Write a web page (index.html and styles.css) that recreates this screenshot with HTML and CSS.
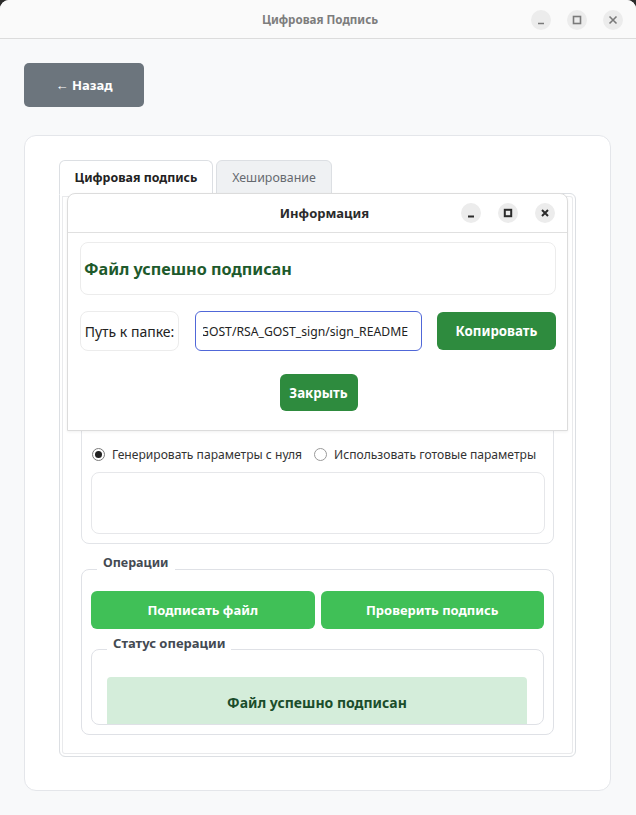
FILE: index.html
```html
<!DOCTYPE html>
<html lang="ru">
<head>
<meta charset="utf-8">
<title>Цифровая Подпись</title>
<link rel="stylesheet" href="styles.css">
</head>
<body>
<div class="window">
  <header class="titlebar">
    <div></div>
    <div class="title">Цифровая Подпись</div>
    <div class="wbtns">
      <span class="wbtn"><svg viewBox="0 0 20 20" width="20" height="20"><path d="M7 13.5h6" /></svg></span>
      <span class="wbtn"><svg viewBox="0 0 20 20" width="20" height="20"><rect x="6.5" y="6.5" width="7" height="7" /></svg></span>
      <span class="wbtn"><svg viewBox="0 0 20 20" width="20" height="20"><path d="M6.5 6.5l7 7M13.5 6.5l-7 7" /></svg></span>
    </div>
  </header>
  <main class="content">
    <button class="back">← Назад</button>
    <section class="card">
      <div class="tabs">
        <div class="tab active">Цифровая подпись</div>
        <div class="tab">Хеширование</div>
      </div>
      <div class="pane">
        <div class="params">
          <div class="radios">
            <label class="radio"><span class="dot checked"></span>Генерировать параметры с нуля</label>
            <label class="radio"><span class="dot"></span>Использовать готовые параметры</label>
          </div>
          <div class="textbox"></div>
        </div>
        <fieldset class="group ops">
          <legend>Операции</legend>
          <div class="op-buttons">
            <button class="btn-light">Подписать файл</button>
            <button class="btn-light">Проверить подпись</button>
          </div>
          <fieldset class="group status">
            <legend>Статус операции</legend>
            <div class="status-box">Файл успешно подписан</div>
          </fieldset>
        </fieldset>

        <div class="dialog">
          <div class="dlg-head">
            <div></div>
            <div class="dlg-title">Информация</div>
            <div class="dlg-btns">
              <span class="dbtn"><svg viewBox="0 0 20 20" width="20" height="20"><path d="M7 13.5h6" /></svg></span>
              <span class="dbtn"><svg viewBox="0 0 20 20" width="20" height="20"><rect x="6.8" y="6.8" width="6.4" height="6.4" /></svg></span>
              <span class="dbtn"><svg viewBox="0 0 20 20" width="20" height="20"><path d="M7 7l6 6M13 7l-6 6" /></svg></span>
            </div>
          </div>
          <div class="dlg-body">
            <div class="msg">Файл успешно подписан</div>
            <div class="path-row">
              <div class="path-label">Путь к папке:</div>
              <div class="path-input"><div class="path-clip"><span>RSA_GOST/RSA_GOST_sign/sign_README</span></div></div>
              <button class="btn-dark copy">Копировать</button>
            </div>
            <div class="close-row">
              <button class="btn-dark close">Закрыть</button>
            </div>
          </div>
        </div>
      </div>
    </section>
  </main>
</div>
</body>
</html>
```

FILE: styles.css
```css
* { box-sizing: border-box; }
html, body { margin: 0; padding: 0; }
body {
  background: #2b2b2b;
  font-family: "Noto Sans", "Open Sans", sans-serif;
  width: 636px;
  height: 815px;
  overflow: hidden;
}
.window {
  width: 636px;
  height: 815px;
  background: #f8f9fa;
  border-radius: 9px 9px 0 0;
  overflow: hidden;
}
.titlebar {
  height: 39px;
  background: #fafafa;
  border-bottom: 1px solid #dcdcdc;
  display: grid;
  grid-template-columns: 1fr auto 1fr;
  align-items: center;
  padding-right: 13px;
}
.title {
  font-size: 11.6px;
  font-weight: 700;
  color: #7d7d7d;
  padding-left: 17px;
  padding-top: 1px;
}
.wbtns {
  justify-self: end;
  display: flex;
  gap: 16px;
  padding-top: 2px;
}
.wbtn, .dbtn {
  width: 20px;
  height: 20px;
  border-radius: 50%;
  background: #ececec;
  display: block;
}
.wbtn svg, .dbtn svg { display: block; }
.wbtn svg path, .wbtn svg rect {
  fill: none;
  stroke: #7a7a7a;
  stroke-width: 1.6;
}
.dbtn svg path, .dbtn svg rect {
  fill: none;
  stroke: #2b2b2b;
  stroke-width: 2;
}
.content {
  padding: 24px 25px 0 24px;
}
.back {
  display: block;
  width: 120px;
  height: 44px;
  border: none;
  border-radius: 5px;
  background: #6c757d;
  color: #ffffff;
  font-family: inherit;
  font-size: 13px;
  font-weight: 700;
  margin: 0 0 28px 0;
  padding: 0;
}
.card {
  background: #ffffff;
  border: 1px solid #e4e6ea;
  border-radius: 12px;
  height: 656px;
  padding: 24px 34px 34px 34px;
}
.tabs {
  display: flex;
  gap: 3px;
  height: 34px;
}
.tab {
  position: relative;
  z-index: 1;
  height: 34px;
  border: 1px solid #dcdfe3;
  border-radius: 6px 6px 0 0;
  background: #eff1f3;
  color: #666a70;
  font-size: 12.4px;
  display: flex;
  align-items: center;
  justify-content: center;
  width: 116px;
}
.tab.active {
  width: 154px;
  background: #ffffff;
  color: #222222;
  font-weight: 700;
  border-bottom-color: #ffffff;
  height: 35px;
}
.pane {
  position: relative;
  margin-top: -1px;
  border: 1px solid #dcdfe3;
  border-radius: 0 6px 6px 6px;
  box-shadow: inset 0 0 0 2px #ffffff, inset 0 0 0 3px #e9eaec;
  padding: 21px;
}
.params {
  height: 329px;
  border: 1px solid #e2e4e8;
  border-radius: 8px;
  display: flex;
  flex-direction: column;
  justify-content: flex-end;
  padding: 0 8px 9px 10px;
}
.radios {
  display: flex;
  align-items: center;
  height: 20px;
  margin-bottom: 8px;
  gap: 12px;
}
.radio {
  display: flex;
  align-items: center;
  gap: 7px;
  font-size: 12.1px;
  color: #333333;
  white-space: nowrap;
}
.dot {
  width: 13px;
  height: 13px;
  border-radius: 50%;
  border: 1px solid #9a9a9a;
  background: #ffffff;
  display: inline-flex;
  align-items: center;
  justify-content: center;
  flex: none;
}
.dot.checked { border-color: #7a7a7a; }
.dot.checked::after {
  content: "";
  width: 7px;
  height: 7px;
  border-radius: 50%;
  background: #222222;
}
.textbox {
  height: 62px;
  border: 1px solid #e6e7ea;
  border-radius: 8px;
  margin-left: -1px;
}
.group {
  margin: 0;
  border: 1px solid #dfe1e6;
  border-radius: 8px;
  min-width: 0;
}
.group legend {
  font-size: 12.5px;
  font-weight: 700;
  color: #444a52;
  line-height: 18px;
  padding: 0 6px 12px 6px;
}
.ops {
  margin-top: 10px;
  padding: 7px 9px 9px 9px;
}
.ops > legend { margin-left: 6px; }
.op-buttons {
  display: flex;
  gap: 6px;
}
.btn-light {
  flex: 1;
  height: 38px;
  border: none;
  border-radius: 6px;
  background: #40c057;
  color: #ffffff;
  font-family: inherit;
  font-size: 13px;
  font-weight: 700;
  padding: 0;
}
.status {
  margin-top: 5px;
  padding: 13px 16px 0 15px;
}
.status > legend { margin-left: 0; font-size: 13px; }
.status-box {
  height: 47px;
  padding-top: 4px;
  background: #d4edda;
  border-radius: 4px 4px 0 0;
  color: #1b4d2b;
  font-size: 14px;
  font-weight: 700;
  display: flex;
  align-items: center;
  justify-content: center;
}
.dialog {
  position: absolute;
  top: -1px;
  left: 7px;
  width: 501px;
  height: 238px;
  background: #ffffff;
  border: 1px solid #dcdcdc;
  border-radius: 8px 8px 0 0;
  box-shadow: 0 1px 3px rgba(0,0,0,0.06);
  z-index: 2;
}
.dlg-head {
  height: 39px;
  border-bottom: 1px solid #e0e0e0;
  display: grid;
  grid-template-columns: 1fr auto 1fr;
  align-items: center;
  padding-right: 12px;
}
.dlg-title {
  font-size: 13px;
  font-weight: 700;
  color: #2b2b2b;
  padding-left: 26px;
}
.dlg-btns {
  justify-self: end;
  display: flex;
  gap: 17px;
}
.dlg-body {
  padding: 9px 11px 0 12px;
}
.msg {
  height: 53px;
  border: 1px solid #ececec;
  border-radius: 8px;
  display: flex;
  align-items: center;
  padding-left: 3px;
  font-size: 16.2px;
  font-weight: 700;
  color: #1e5a2c;
}
.path-row {
  margin-top: 16px;
  display: flex;
  align-items: center;
  height: 40px;
}
.path-label {
  width: 99px;
  height: 40px;
  border: 1px solid #ececec;
  border-radius: 8px;
  display: flex;
  align-items: center;
  justify-content: center;
  font-size: 14px;
  color: #222222;
}
.path-input {
  margin-left: 16px;
  width: 227px;
  height: 40px;
  border: 1px solid #5067d8;
  border-radius: 6px;
  padding: 0 13px 0 7px;
  display: flex;
  align-items: center;
}
.path-clip {
  width: 100%;
  overflow: hidden;
  white-space: nowrap;
  display: flex;
  justify-content: flex-end;
  font-size: 12.2px;
  color: #222222;
}
.path-clip span { flex: none; }
.btn-dark {
  border: none;
  border-radius: 6px;
  background: #2e8b3e;
  color: #ffffff;
  font-family: inherit;
  font-size: 13.3px;
  font-weight: 700;
  padding: 0;
}
.copy {
  margin-left: 15px;
  width: 119px;
  height: 38px;
}
.close-row {
  margin-top: 23px;
  display: flex;
  justify-content: center;
  padding-left: 1px;
}
.close {
  width: 78px;
  height: 37px;
}
```
